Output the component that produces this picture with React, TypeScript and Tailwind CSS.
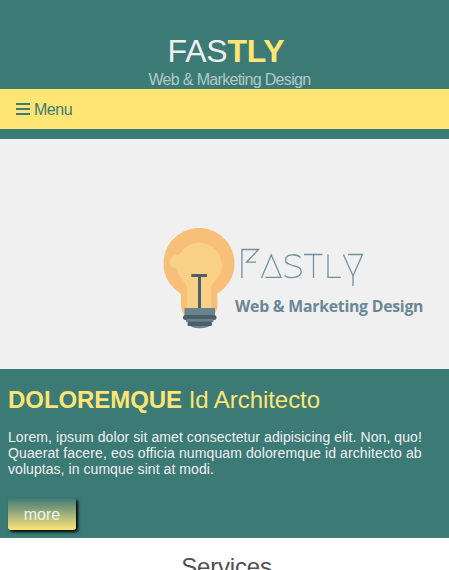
function Bulb() {
  return (
    <svg viewBox="0 0 72 102" className="h-[102px] w-[72px] shrink-0">
      <path d="M18 66A35.500 35.500 0 1 1 54 66Q54.500 67 54.500 73Q55 84 50 88H22Q17.500 83 18 73Q18 69 18 66Z" fill="#f8bf79" />
      <path d="M36 14.800A23 23 0 0 0 16 26.800Q7 26.500 7 34Q7 39.500 13.500 40.500C15 49.500 23 54 24 59V81H48V59C49 54 59 49 59 38A23 23 0 0 0 36 14.800Z" fill="#f8d187" />
      <path d="M28.300 46H44V49H38V80H35V49H28.300Z" fill="#4c5f69" />
      <path d="M21.500 80H52V88H21.500Z" fill="#68828e" />
      <path d="M25 96H48Q46 100.300 36 100.300Q29 100.300 25 96Z" fill="#68828e" />
      <rect x="20" y="87" width="33.500" height="5" rx="2.500" fill="#4c5f69" />
      <rect x="23" y="91" width="27.500" height="3" fill="#68828e" />
      <rect x="24.500" y="93.500" width="24.500" height="4.500" rx="1.500" fill="#4c5f69" />
    </svg>
  );
}

function Wordmark() {
  return (
    <svg viewBox="0 0 190 76" className="-ml-px h-[76px] w-[190px] shrink-0" role="img" aria-label="Fastly" fill="none" stroke="#71909d" strokeWidth="1.300">
      <path d="M7.900 38V9.500H24.500L12.500 22.200H22M27.500 38L37.300 15L47 37.300H31.500M66.500 17.500C63 13.500 51.500 13.500 51.500 20C51.500 27.500 67.200 23.500 67.200 31.500C67.200 38.500 54 39 50.500 35.500M70 14.500H88.500M79.500 14.500V38M94 14.500V37.300H107M109.500 14.500L119 36L128.500 14.500H114M119 36V46" />
      <text x="1" y="71.500" fill="#6a8796" stroke="none" className="font-['Open_Sans',sans-serif] text-[15.800px] font-bold" textLength="188.500">Web &amp; Marketing Design</text>
    </svg>
  );
}

export default function App() {
  return (
    <div className="h-[570px] overflow-hidden bg-white font-['Liberation_Sans',Arial,sans-serif]">
      <header className="h-[139px] bg-[#3c7a76]">
        <div className="h-[89px] pt-[33px] text-center">
          <h1 className="pl-[3px] text-[32px] leading-[37px] tracking-[-0.200px] text-[#f0f0f0]">
            FAS<span className="font-bold text-[#ffe574]">TLY</span>
          </h1>
          <p className="mt-px pl-[10px] text-[16px] leading-[18px] tracking-[-0.660px] text-[#b1cac8]">Web &amp; Marketing Design</p>
        </div>
        <nav className="flex h-10 items-center bg-[#ffe574] pl-4 text-[#3c7a76]">
          <svg viewBox="0 0 14 12" className="h-3 w-[14px]" fill="currentColor">
            <path d="M0 0H14V2H0ZM0 5H14V7H0ZM0 10H14V12H0Z" />
          </svg>
          <span className="ml-1 pt-[2px] text-[16px] leading-[18px] tracking-[-0.500px]">Menu</span>
        </nav>
      </header>
      <section className="flex h-[230px] items-start bg-[#f0f0f0] pl-[163px] pt-[89px]">
        <Bulb />
        <div className="pt-[12px]"><Wordmark /></div>
      </section>
      <section className="h-[169px] bg-[#3c7a76] px-2 pt-[17px]">
        <h2 className="text-[24px] leading-[27px] tracking-[-0.060px] text-[#ffe574]">
          <span className="font-bold">DOLOREMQUE</span> Id Architecto
        </h2>
        <p className="mt-4 whitespace-nowrap text-[14px] leading-[16px] tracking-[0.080px] text-[#f0f0f0]">
          Lorem, ipsum dolor sit amet consectetur adipisicing elit. Non, quo!<br />
          <span className="tracking-[0.110px]">Quaerat facere, eos officia numquam doloremque id architecto ab</span><br />
          <span className="tracking-[0.060px]">voluptas, in cumque sint at modi.</span>
        </p>
        <button className="mt-[21px] block h-8 w-[68px] rounded-[3px] bg-linear-to-b from-[#3c7a76] to-[#ffe574] pt-[2px] text-[16px] leading-[18px] text-[#f0f0f0] shadow-[2px_2px_3px_#000]">more</button>
      </section>
      <h2 className="pl-1 pt-[15px] text-center text-[24px] leading-[27px] tracking-[-0.200px] text-[#505050]">Services</h2>
    </div>
  );
}
